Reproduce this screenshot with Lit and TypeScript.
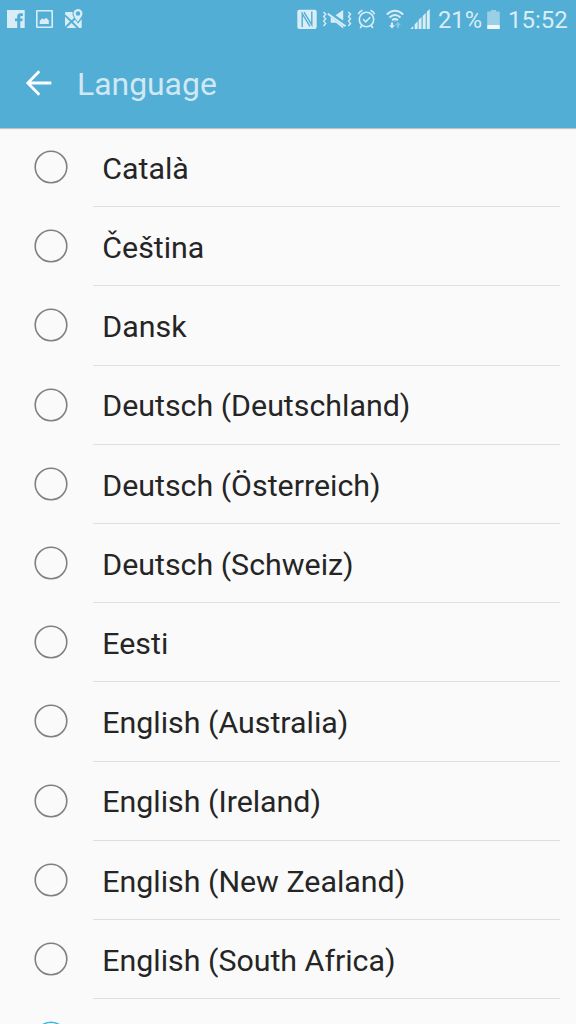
import { LitElement, html, css } from "lit";
import { customElement, property } from "lit/decorators.js";

@customElement("status-bar")
class StatusBar extends LitElement {
  static styles = css`
    :host { display: flex; height: 40px; color: #d9edf6; font-size: 24px; line-height: 40px; }
    svg { display: block; flex: none; }
    .space { flex: 1; }
    .battery-level { width: 48px; padding-left: 2px; box-sizing: border-box; white-space: nowrap; font-size: 23.7px; }
    .clock { width: 74px; padding-left: 6px; box-sizing: border-box; white-space: nowrap; }
  `;
  render() {
    return html`
      <svg width="100" height="40" viewBox="0 0 100 40" fill="currentColor">
        <path d="M7 10H24.7V28H20.3V21.2H22.4L22.8 18.6H20.3V17.1Q20.3 15.9 21.6 15.9H22.9V13.3H20.7Q17.2 13.3 17.2 16.6V18.6H15V21.2H17.2V28H7Z"/>
        <path fill-rule="evenodd" d="M37 10H52Q53 10 53 11V27Q53 28 52 28H37Q36 28 36 27V11Q36 10 37 10ZM37.6 11.6V26.4H51.4V11.6Z"/>
        <path d="M39.7 24V20.7L42.5 18.2L44 19.5L46 17.7L48.8 20.3V24Z"/>
        <path d="M66 12H72.5Q72 15 74 18L71.6 20.2L65 14.2V13Q65 12 66 12ZM65 16.7L70 21.6L65 26.5ZM66.3 28L71.5 23L76.5 28ZM73 21.8L75.3 19.8L78 23.8L81.7 19V27Q81.7 28 80.7 28H79.2Z"/>
        <path fill-rule="evenodd" d="M78 9C75 9 73.5 11.2 73.5 13.6C73.5 16.4 75.6 18.6 77.8 22C80 18.7 82.5 16.5 82.5 13.6C82.5 11.2 80.7 9 78 9ZM78 11.2A2.3 2.3 0 1 1 78 15.8A2.3 2.3 0 1 1 78 11.2Z"/>
      </svg>
      <span class="space"></span>
      <svg width="146" height="40" viewBox="290 0 146 40" fill="currentColor">
        <rect x="297.3" y="9.7" width="19.4" height="19.3" rx="2"/>
        <path fill="none" stroke="#52aed5" stroke-width="1.4" d="M302.2 27V13.6L310 26.4M311.8 11.5V24.8L304 12.2"/>
        <path d="M335.5 15.2L343.2 10V20.5ZM330.7 17.5V22.7H336L343.2 28.5V26L330.7 17Z"/>
        <path d="M327.8 13.8L345.5 26.2" fill="none" stroke="currentColor" stroke-width="2"/>
        <path d="M323.5 12L325.7 14.3L323.7 16.5L325.7 18.8L323.7 21.1L325.7 23.4L323.5 26M348.3 12L350.5 14.3L348.5 16.5L350.5 18.8L348.5 21.1L350.5 23.4L348.3 26" fill="none" stroke="currentColor" stroke-width="1.4"/>
        <g fill="none" stroke="currentColor" stroke-width="1.6">
          <circle cx="366.5" cy="19.5" r="7.2"/>
          <path d="M363.2 19.2L365.7 21.8L370.2 17.3M361.7 25.5L360.2 28M371.3 25.5L372.8 28M358.4 14.2Q359.3 11.4 362.5 10.2M374.6 14.2Q373.7 11.4 370.5 10.2"/>
        </g>
        <g fill="none" stroke="currentColor" stroke-width="2">
          <path d="M386.8 14.5Q395 6.9 403.2 14.5M389.5 17.5Q395 12.5 400.5 17.5M392.1 20.2Q395 17.8 397.9 20.2"/>
        </g>
        <path d="M394 20.4L395 21.8L396 20.4ZM391 22.4H393V25.2H395L392 28.6L389 25.2H391Z"/>
        <path opacity=".4" d="M398 21.8L401 25.3H399V28H397V25.3H395Z"/>
        <path d="M410.4 29L413.2 26V29ZM414.6 24.5L417.6 21.2V29H414.6ZM418.6 20L421.5 17V29H418.6ZM422.7 16L425.7 13V29H422.7ZM426.8 11.8L429.8 9V29H426.8Z"/>
      </svg>
      <span class="battery-level">21%</span>
      <svg width="18" height="40" viewBox="484 0 18 40">
        <path fill="#9ad0e6" d="M487.2 11.6H491V10H496V11.6H499.8V25H487.2Z"/>
        <path fill="#f0f8fb" d="M487.2 25H499.8V29H487.2Z"/>
      </svg>
      <span class="clock">15:52</span>
    `;
  }
}

@customElement("language-row")
class LanguageRow extends LitElement {
  @property() label = "";
  @property({ type: Boolean }) selected = false;
  static styles = css`
    :host { display: flex; box-sizing: border-box; height: 79.2px; padding: 0 16px 0 34px; flex: none; }
    .radio { flex: none; width: 34px; height: 34px; margin: 22px 25px 0 0; color: #808080; }
    .radio.on { color: #3fb4e0; }
    .label { flex: 1; box-sizing: border-box; border-bottom: 1px solid #dfdfdf; padding: 1.85px 0 0 9.3px; line-height: 78px; font-size: 30.35px; color: #252525; white-space: nowrap; }
  `;
  render() {
    return html`
      <svg class="radio ${this.selected ? "on" : ""}" viewBox="0 0 34 34" fill="none" stroke="currentColor">
        <circle cx="17" cy="17" r="15.8" stroke-width="1.6"/>
      </svg>
      <span class="label">${this.label}</span>
    `;
  }
}

@customElement("app-root")
class AppRoot extends LitElement {
  static styles = css`
    :host { display: flex; flex-direction: column; height: 1024px; overflow: hidden; background: #fafafa; font-family: Roboto, sans-serif; }
    .top { flex: none; height: 128px; background: #52aed5; box-shadow: 0 1px 1px rgba(0, 0, 0, .22); }
    .bar { display: flex; align-items: center; height: 88px; padding-left: 24px; }
    .back { flex: none; margin-bottom: 2px; }
    .title { margin-left: 25px; font-size: 31.9px; font-weight: 400; color: #cfe8f3; line-height: 40px; }
    .list { display: flex; flex-direction: column; }
  `;
  languages = [
    "Català", "Čeština", "Dansk", "Deutsch (Deutschland)", "Deutsch (Österreich)",
    "Deutsch (Schweiz)", "Eesti", "English (Australia)", "English (Ireland)",
    "English (New Zealand)", "English (South Africa)",
  ];
  render() {
    return html`
      <div class="top">
        <status-bar></status-bar>
        <div class="bar">
          <svg class="back" width="28" height="28" viewBox="0 0 28 28" fill="none" stroke="#fff" stroke-width="2.8">
            <path d="M15.3 2.3L3.8 14L15.3 25.7M4 14H27.3"/>
          </svg>
          <span class="title">Language</span>
        </div>
      </div>
      <div class="list">
        ${this.languages.map((name) => html`<language-row .label=${name}></language-row>`)}
        <language-row selected></language-row>
      </div>
    `;
  }
}
